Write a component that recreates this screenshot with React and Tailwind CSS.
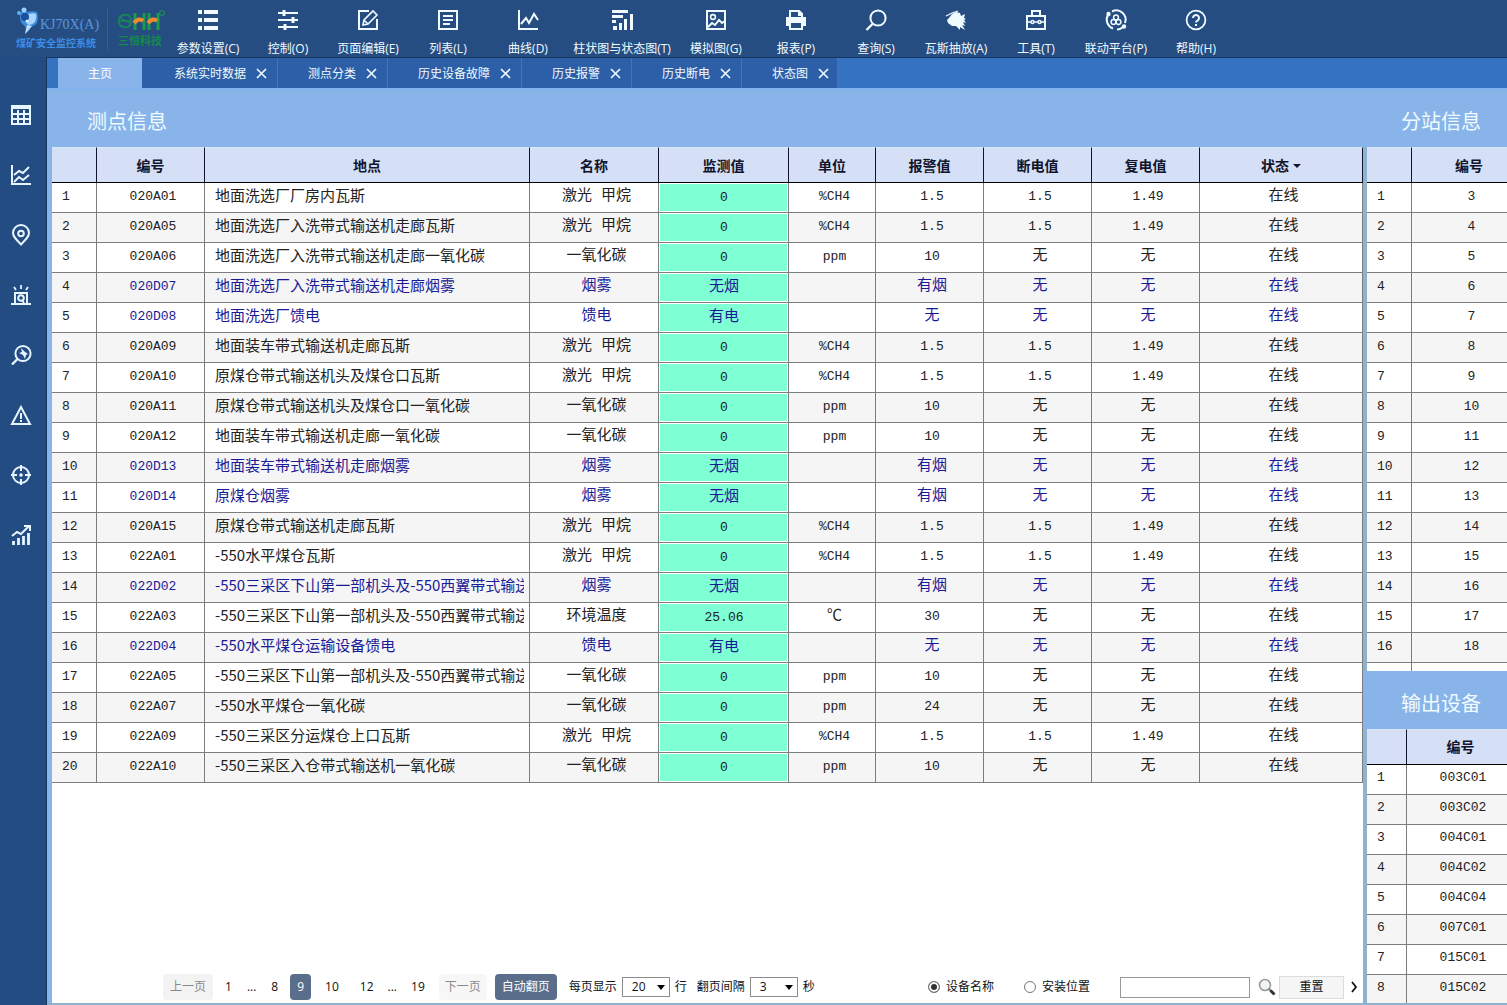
import React, { useState } from 'react';

const menus = [
  { label: '参数设置(C)', icon: 'params' },
  { label: '控制(O)', icon: 'control' },
  { label: '页面编辑(E)', icon: 'edit' },
  { label: '列表(L)', icon: 'list' },
  { label: '曲线(D)', icon: 'curve' },
  { label: '柱状图与状态图(T)', icon: 'bars', wide: true },
  { label: '模拟图(G)', icon: 'image' },
  { label: '报表(P)', icon: 'print' },
  { label: '查询(S)', icon: 'search' },
  { label: '瓦斯抽放(A)', icon: 'gas' },
  { label: '工具(T)', icon: 'tools' },
  { label: '联动平台(P)', icon: 'link' },
  { label: '帮助(H)', icon: 'help' },
];

const tabs = ['系统实时数据', '测点分类', '历史设备故障', '历史报警', '历史断电', '状态图'];

const sideItems = [
  { label: '实时数据', icon: 'grid' },
  { label: '曲线', icon: 'lines' },
  { label: '位置', icon: 'pin' },
  { label: '报警', icon: 'alarm' },
  { label: '断电查询', icon: 'powerSearch' },
  { label: '故障', icon: 'warning' },
  { label: '定位', icon: 'target' },
  { label: '统计', icon: 'growth' },
];

const GAS = ['激光 甲烷', '0', '%CH4', '1.5', '1.5', '1.49'];
const CO = ['一氧化碳', '0', 'ppm', '10', '无', '无'];
const SMOKE = ['烟雾', '无烟', '', '有烟', '无', '无'];
const FEED = ['馈电', '有电', '', '无', '无', '无'];

const points = [
  ['020A01', '地面洗选厂厂房内瓦斯', ...GAS],
  ['020A05', '地面洗选厂入洗带式输送机走廊瓦斯', ...GAS],
  ['020A06', '地面洗选厂入洗带式输送机走廊一氧化碳', ...CO],
  ['020D07', '地面洗选厂入洗带式输送机走廊烟雾', ...SMOKE],
  ['020D08', '地面洗选厂馈电', ...FEED],
  ['020A09', '地面装车带式输送机走廊瓦斯', ...GAS],
  ['020A10', '原煤仓带式输送机头及煤仓口瓦斯', ...GAS],
  ['020A11', '原煤仓带式输送机头及煤仓口一氧化碳', ...CO],
  ['020A12', '地面装车带式输送机走廊一氧化碳', ...CO],
  ['020D13', '地面装车带式输送机走廊烟雾', ...SMOKE],
  ['020D14', '原煤仓烟雾', ...SMOKE],
  ['020A15', '原煤仓带式输送机走廊瓦斯', ...GAS],
  ['022A01', '-550水平煤仓瓦斯', ...GAS],
  ['022D02', '-550三采区下山第一部机头及-550西翼带式输送', ...SMOKE],
  ['022A03', '-550三采区下山第一部机头及-550西翼带式输送', '环境温度', '25.06', '℃', '30', '无', '无'],
  ['022D04', '-550水平煤仓运输设备馈电', ...FEED],
  ['022A05', '-550三采区下山第一部机头及-550西翼带式输送', ...CO],
  ['022A07', '-550水平煤仓一氧化碳', '一氧化碳', '0', 'ppm', '24', '无', '无'],
  ['022A09', '-550三采区分运煤仓上口瓦斯', ...GAS],
  ['022A10', '-550三采区入仓带式输送机一氧化碳', ...CO],
];

const stations = Array.from({ length: 17 }, (_, i) => String(i + 3));
const outputs = ['003C01', '003C02', '004C01', '004C02', '004C04', '007C01', '015C01', '015C02'];

const icons = {
  params: (
    <g fill="currentColor" stroke="none">
      <path d="M0 0h4v4H0zM0 8h4v4H0zM0 16h4v4H0zM6 0h14v4H6zM6 8h14v4H6zM6 16h14v4H6z" />
    </g>
  ),
  control: (
    <>
      <path d="M0 3h20M0 10h20M0 17h20" />
      <path d="M6 0v6M15 7v6M7 14v6" strokeWidth="3" />
    </>
  ),
  edit: (
    <>
      <path d="M11 1H1v18h18V9" />
      <path d="M5 15l1-5 9-9 4 4-9 9zM6 10l4 4" strokeWidth="1.6" />
    </>
  ),
  list: <path d="M1 1h18v18H1zM5 6h10M5 10h10M5 14h7" />,
  curve: <path d="M1 0v19h19M3 14l5-6 3 5 5-9 4 6" />,
  bars: (
    <g fill="currentColor" stroke="none">
      <path d="M0 0h16v3H0zM0 5h11v3H0zM0 10h4v3H0zM1 16h4v4H1zM7 13h3v7H7zM12 9h3v11h-3zM18 4h3v16h-3z" />
    </g>
  ),
  image: (
    <>
      <path d="M1 1h18v18H1z" />
      <circle cx="7" cy="7" r="2.4" strokeWidth="1.6" />
      <path d="M2 17l4-4 3 2 4-5 3 3 3-2" />
    </>
  ),
  print: (
    <>
      <path d="M4 7V1h9l3 3v3" />
      <path d="M0 7h20v9h-3v-4H3v4H0z" fill="currentColor" stroke="none" />
      <path d="M4 12h12v7H4z" />
      <path d="M12 1h2l3 3v2h-5z" fill="currentColor" stroke="none" />
    </>
  ),
  search: (
    <>
      <circle cx="12" cy="8" r="7.6" strokeWidth="2" />
      <path d="M6.500 14L0.500 20" strokeWidth="2.4" />
    </>
  ),
  gas: (
    <>
      <path
        fill="currentColor"
        stroke="none"
        d="M3 8l3-4 4-2 4 1 1 3 4-2-1 4 2 1-2 1 2 3-3-1 2 4-3-1 3 5-5-3v3l-4-4-4 0-4-3-1-3z"
      />
      <path d="M0 6l6-3 6-2" strokeWidth="1.200" />
    </>
  ),
  tools: (
    <>
      <path d="M1 6h18v13H1zM6 6V1h8v5" />
      <path d="M2 12h3M8 12h4M15 12h3" strokeWidth="1.400" />
      <circle cx="6.500" cy="12" r="1.500" strokeWidth="1.400" />
      <circle cx="13.500" cy="12" r="1.500" strokeWidth="1.400" />
    </>
  ),
  link: (
    <>
      <path d="M7 18.500A9.300 9.300 0 0 1 2 5M6 1.500A9.300 9.300 0 0 1 19 13M17 17a9 9 0 0 1-6 2.500" />
      <circle cx="2.500" cy="4" r="2.200" fill="currentColor" stroke="none" />
      <circle cx="18" cy="16.500" r="2.200" fill="currentColor" stroke="none" />
      <circle cx="10" cy="7.500" r="2.400" strokeWidth="1.500" />
      <circle cx="7.500" cy="12" r="2.400" strokeWidth="1.500" />
      <circle cx="12.500" cy="12" r="2.400" strokeWidth="1.500" />
    </>
  ),
  help: (
    <>
      <circle cx="10" cy="10" r="9.400" strokeWidth="1.800" />
      <path d="M7 8a3 3 0 1 1 4.500 2.600C10.400 11.200 10 11.600 10 12.500M10 14v2" />
    </>
  ),
  grid: (
    <>
      <path d="M1 2h18v17H1zM1 9h18M1 14h18M7 5v14M13 5v14" />
      <path d="M0 0h20v4H0z" fill="currentColor" stroke="none" />
    </>
  ),
  lines: <path d="M1 0v19h19M3 10l5-4 4 2 6-6M3 17l5-5 4 3 6-5" />,
  pin: (
    <>
      <path d="M10 19.500C5 14.500 2 11.500 2 8a8 8 0 0 1 16 0c0 3.500-3 6.500-8 11.500z" />
      <circle cx="10" cy="8.500" r="2.800" />
    </>
  ),
  alarm: (
    <>
      <path d="M0 19h20M4 19V8h12v11" />
      <circle cx="10" cy="13" r="2.800" />
      <path d="M10 0v4M3 2l2 3M17 2l-2 3M11 15l2 3" strokeWidth="1.800" />
    </>
  ),
  powerSearch: (
    <>
      <circle cx="12" cy="8.500" r="7.600" />
      <path d="M6.500 14L1 19.500" strokeWidth="2.400" />
      <path d="M10 3l1 4-3 1 4 2 2 4 1-4 2-1-3-2z" fill="currentColor" stroke="none" />
    </>
  ),
  warning: (
    <>
      <path d="M10 2l9 17H1z" />
      <path d="M10 8v6M10 15v2" />
    </>
  ),
  target: (
    <>
      <circle cx="10" cy="10" r="8" />
      <path d="M10 0v6M10 14v6M0 10h6M14 10h6" />
      <circle cx="10" cy="10" r="1.800" fill="currentColor" stroke="none" />
    </>
  ),
  growth: (
    <>
      <path d="M1 11l5-4 4 2 8-8M13 1h6v5" />
      <path d="M2.500 20v-4M7.500 20v-7M12.500 20v-9M17.500 20V8" strokeWidth="2.800" />
    </>
  ),
};

function Icon({ name }) {
  return (
    <svg className="h-5 w-5 overflow-visible" viewBox="0 0 20 20" fill="none" stroke="currentColor" strokeWidth="2" aria-hidden="true">
      {icons[name]}
    </svg>
  );
}

function Logo() {
  return (
    <div className="flex w-[168px] shrink-0 items-center pl-4">
      <div className="w-[92px] border-r border-[#3a5c8c]">
        <div className="flex items-end">
          <svg className="h-7 w-6" viewBox="0 0 24 28" aria-hidden="true">
            <path d="M5 5c5 1 10-2 16 0 2 7 1 13-6 15-1 3-3 5-6 7 1-4 1-6 0-8-5-3-6-8-4-14z" fill="#3f8be0" />
            <path d="M12 7c4-1 7-1 8 0 1 6-1 10-7 11-4-1-3-9-1-11z" fill="#a9d4fb" />
            <path d="M11 18l5 1-7 8z" fill="#bfe0ff" />
            <circle cx="9" cy="10" r="4" fill="#1b4f9c" />
            <circle cx="11" cy="14" r="1.500" fill="#d8eeff" />
            <circle cx="3" cy="6" r="2" fill="#5fb0f5" />
            <circle cx="8" cy="3" r="2.500" fill="#9ad0ff" />
          </svg>
          <span className="font-['Liberation_Serif',serif] text-sm leading-5 text-[#5c95d8]">KJ70X(A)</span>
        </div>
        <div className="text-[10px] font-bold leading-4 whitespace-nowrap text-[#3d8ee6]">煤矿安全监控系统</div>
      </div>
      <div className="pl-[10px]">
        <svg className="h-6 w-12" viewBox="0 0 48 24" fill="none" aria-hidden="true">
          <circle cx="7" cy="12" r="6.500" stroke="#17875a" strokeWidth="1.500" />
          <path d="M12 7C9 4 2 6 3 9s9 2 9 6-7 4-10 1M1 12h12" stroke="#17875a" strokeWidth="1.500" />
          <path d="M17 4v17M26 4v17M31 4v17M40 4v17" stroke="#1c9a4c" strokeWidth="3" />
          <path d="M16 14q5-6 9-2M30 14q5-6 9-2" stroke="#f08a2c" strokeWidth="4" />
          <circle cx="44" cy="4" r="2.500" stroke="#1c9a4c" />
        </svg>
        <div className="text-[11px] font-bold leading-4 text-[#128a4c]">三恒科技</div>
      </div>
    </div>
  );
}

const isLatin = (text) => /^[\x20-\x7e]*$/.test(text);

function Cell({ children, className = 'pl-[5px] pb-[2px] text-center' }) {
  return (
    <td
      className={`h-[30px] border-r border-b border-[#7d7d7d] whitespace-nowrap ${
        isLatin(children) ? 'text-[13px]' : 'text-[15px]'
      } ${className}`}
    >
      {children}
    </td>
  );
}

function IndexCell({ children }) {
  return <Cell className="pb-[2px] pl-[10px] text-left text-[#222]">{children}</Cell>;
}

function Th({ children }) {
  return (
    <th className="h-9 border-t border-r border-b border-t-[#d8e6fa] border-r-[#10142c] border-b-black bg-[#d5dff5] pt-px text-sm font-bold">
      {children}
    </th>
  );
}

const tableFont = "font-['Liberation_Mono','Noto_Sans_CJK_SC',monospace]";
const uiFont = "font-['Open_Sans','Noto_Sans_CJK_SC',sans-serif]";

function PointTable() {
  return (
    <table className={`w-full table-fixed border-separate border-spacing-0 text-[#222] ${tableFont}`}>
      <colgroup>
        <col className="w-[45px]" />
        <col className="w-[108px]" />
        <col />
        <col className="w-[129px]" />
        <col className="w-[130px]" />
        <col className="w-[87px]" />
        <col className="w-[108px]" />
        <col className="w-[108px]" />
        <col className="w-[108px]" />
        <col className="w-[163px]" />
      </colgroup>
      <thead className={`text-[#10142c] ${uiFont}`}>
        <tr>
          <Th />
          <Th>编号</Th>
          <Th>地点</Th>
          <Th>名称</Th>
          <Th>监测值</Th>
          <Th>单位</Th>
          <Th>报警值</Th>
          <Th>断电值</Th>
          <Th>复电值</Th>
          <Th>
            <span className="inline-flex items-center gap-1">
              状态
              <svg className="h-1 w-2" viewBox="0 0 8 4" fill="currentColor" aria-hidden="true">
                <path d="M0 0h8L4 4z" />
              </svg>
            </span>
          </Th>
        </tr>
      </thead>
      <tbody>
        {points.map((row, i) => {
          const [code, place, name, value, unit, alarm, off, on] = row;
          return (
            <tr key={code} className={`even:bg-[#f5f5f5] ${code.includes('D') ? 'text-[#1a1a96]' : ''}`}>
              <IndexCell>{String(i + 1)}</IndexCell>
              <Cell>{code}</Cell>
              <td className="h-[30px] border-r border-b border-[#7d7d7d] pr-[5px] pb-[5px] pl-[10px] font-['Noto_Sans_CJK_SC',sans-serif] text-[15px]">
                <div className="overflow-hidden leading-5 whitespace-nowrap">{place}</div>
              </td>
              <Cell>{name}</Cell>
              <Cell className="bg-[#7fffd4] pt-px pl-px text-center shadow-[inset_0_0_0_1px_white]">{value}</Cell>
              <Cell>{unit}</Cell>
              <Cell>{alarm}</Cell>
              <Cell>{off}</Cell>
              <Cell>{on}</Cell>
              <Cell>在线</Cell>
            </tr>
          );
        })}
      </tbody>
    </table>
  );
}

function CodeTable({ rows, width, firstCol }) {
  return (
    <table className={`table-fixed border-separate border-spacing-0 bg-white text-[#222] ${width} ${tableFont}`}>
      <colgroup>
        <col className={firstCol} />
        <col />
      </colgroup>
      <thead className={`text-[#10142c] ${uiFont}`}>
        <tr>
          <Th />
          <Th>编号</Th>
        </tr>
      </thead>
      <tbody>
        {rows.map((code, i) => (
          <tr key={code} className="even:bg-[#f5f5f5]">
            <IndexCell>{String(i + 1)}</IndexCell>
            <Cell>{code}</Cell>
          </tr>
        ))}
      </tbody>
    </table>
  );
}

function PanelTitle({ children }) {
  return <h2 className="flex h-[58px] shrink-0 items-center pt-2 pl-[35px] text-xl whitespace-nowrap text-[#effbff]">{children}</h2>;
}

function SidePanel({ title, grow, children }) {
  return (
    <section className={`flex min-h-0 flex-col overflow-hidden ${grow}`}>
      <div className="pl-[3px]">
        <PanelTitle>{title}</PanelTitle>
      </div>
      <div className="min-h-0 flex-1 overflow-hidden border-l-4 border-[#8fb3cf]">{children}</div>
    </section>
  );
}

function NumberSelect({ id, value, onChange, options }) {
  return (
    <span className="relative inline-flex">
      <select
        id={id}
        value={value}
        onChange={(e) => onChange(e.target.value)}
        className="h-5 w-12 appearance-none border border-[#8c8c8c] bg-white pl-[9px] text-xs"
      >
        {options.map((o) => (
          <option key={o}>{o}</option>
        ))}
      </select>
      <svg className="pointer-events-none absolute top-2 right-[5px] h-[5px] w-2" viewBox="0 0 8 5" aria-hidden="true">
        <path d="M0 0h8L4 5z" />
      </svg>
    </span>
  );
}

function Radio({ label, name, checked, onChange }) {
  return (
    <label className="flex items-center gap-[6px]">
      <input
        type="radio"
        name={name}
        checked={checked}
        onChange={onChange}
        className="h-3 w-3 appearance-none rounded-full border border-[#777] bg-white checked:bg-[#333] checked:shadow-[inset_0_0_0_2px_white]"
      />
      {label}
    </label>
  );
}

function Pager() {
  const [page, setPage] = useState('9');
  const [size, setSize] = useState('20');
  const [delay, setDelay] = useState('3');
  const [field, setField] = useState('name');
  const [keyword, setKeyword] = useState('');

  const pageButton = (n) => (
    <button
      key={n}
      onClick={() => setPage(n)}
      className={`h-[26px] rounded px-[7px] ${page === n ? 'bg-[#5a6d8b] text-white' : ''}`}
    >
      {n}
    </button>
  );

  return (
    <div className="mt-auto flex h-8 items-center justify-between pr-[3px] pl-[111px] text-xs whitespace-nowrap text-[#111]">
      <div className="flex items-center">
        <button className="h-[26px] w-[50px] rounded bg-[#f3f3f3] text-[#8a8a8a]">上一页</button>
        <div className="flex items-center gap-2 px-[5px]">
          {pageButton('1')}
          <span>...</span>
          {pageButton('8')}
        </div>
        {pageButton('9')}
        <div className="flex items-center gap-[7px] px-[7px]">
          {pageButton('10')}
          {pageButton('12')}
          <span>...</span>
          {pageButton('19')}
        </div>
        <button className="h-[26px] w-12 rounded bg-[#f7f7f7] text-[#8a8a8a]">下一页</button>
        <button className="ml-2 h-[26px] w-[62px] rounded bg-[#5a6d8b] text-white">自动翻页</button>
        <div className="flex items-center gap-[5px] pl-3">
          <label htmlFor="page-size">每页显示</label>
          <NumberSelect id="page-size" value={size} onChange={setSize} options={['10', '20', '50']} />
          <span>行</span>
          <label htmlFor="page-delay" className="pl-[5px]">翻页间隔</label>
          <NumberSelect id="page-delay" value={delay} onChange={setDelay} options={['3', '5', '10']} />
          <span>秒</span>
        </div>
      </div>
      <div className="flex items-center">
        <Radio label="设备名称" name="field" checked={field === 'name'} onChange={() => setField('name')} />
        <div className="px-[30px]">
          <Radio label="安装位置" name="field" checked={field === 'place'} onChange={() => setField('place')} />
        </div>
        <input
          type="text"
          aria-label="关键字"
          value={keyword}
          onChange={(e) => setKeyword(e.target.value)}
          className="h-[21px] w-[130px] border border-[#999] bg-white px-1"
        />
        <button aria-label="查询" className="pr-[3px] pl-2">
          <svg className="h-[18px] w-[18px]" viewBox="0 0 18 18" fill="none" aria-hidden="true">
            <circle cx="7" cy="7" r="5.500" fill="#eef4f6" stroke="#9a9a9a" strokeWidth="1.600" />
            <path d="M11 11l2 2" stroke="#777" strokeWidth="2" />
            <path d="M12.500 12.500l4 4" stroke="#333" strokeWidth="3" />
          </svg>
        </button>
        <button className="h-[23px] w-[65px] border border-[#dcdcdc] bg-[#f5f5f5]">重置</button>
        <button aria-label="更多" className="pl-1">
          <svg className="h-3 w-3" viewBox="0 0 12 12" fill="none" stroke="#111" strokeWidth="1.800" aria-hidden="true">
            <path d="M4 1l4 5-4 5" />
          </svg>
        </button>
      </div>
    </div>
  );
}

export default function App() {
  return (
    <div className={`flex h-screen flex-col overflow-hidden bg-[#234c82] text-xs ${uiFont}`}>
      <header className="flex h-[57px] shrink-0 bg-[#264d82]">
        <Logo />
        <nav className="flex text-[#effbff]">
          {menus.map((m) => (
            <button
              key={m.label}
              className={`flex flex-col items-center gap-[11px] pt-[10px] leading-4 whitespace-nowrap ${m.wide ? 'w-27' : 'w-20'}`}
            >
              <Icon name={m.icon} />
              {m.label}
            </button>
          ))}
        </nav>
      </header>

      <div className="flex min-h-0 flex-1">
        {/* Sidebar */}
        <nav className="flex w-[46px] shrink-0 flex-col pt-7 pr-1 text-[#e6f5ff]">
          {sideItems.map((s) => (
            <button key={s.icon} aria-label={s.label} className="flex h-15 items-center justify-center">
              <Icon name={s.icon} />
            </button>
          ))}
        </nav>

        <main className="flex min-w-0 flex-1 flex-col border-t border-l border-[#173561]">
          {/* Tabs */}
          <div className="flex h-[30px] shrink-0 bg-[#3672c2] pl-[11px] text-[#effbff]">
            <button className="w-[84px] bg-[#88b4e9] pt-px text-white">主页</button>
            {tabs.map((t) => (
              <div
                key={t}
                className="flex items-center gap-[10px] border-r border-[#3f75bd] bg-[#2c5fa8] pt-px pr-[10px] pl-[30px] whitespace-nowrap first-of-type:pl-8 last-of-type:pr-2"
              >
                <button>{t}</button>
                <button aria-label={`关闭${t}`}>
                  <svg className="h-[11px] w-[11px]" viewBox="0 0 11 11" stroke="currentColor" strokeWidth="1.600" aria-hidden="true">
                    <path d="M1 1l9 9M10 1l-9 9" />
                  </svg>
                </button>
              </div>
            ))}
          </div>

          <div className="flex min-h-0 flex-1 border-t border-b-2 border-t-[#7fb2f3] border-b-[#8fb3cf] bg-[#88b4e9] pl-[5px]">
            <section className="flex min-w-0 flex-1 flex-col">
              <PanelTitle>测点信息</PanelTitle>
              <div className="flex min-h-0 flex-1 flex-col bg-white">
                <PointTable />
                <Pager />
              </div>
            </section>

            <aside className="flex w-36 shrink-0 flex-col">
              <SidePanel title="分站信息" grow="flex-[7]">
                <CodeTable rows={stations} width="w-40" firstCol="w-[45px]" />
              </SidePanel>
              <SidePanel title="输出设备" grow="flex-[4]">
                <CodeTable rows={outputs} width="w-[148px]" firstCol="w-10" />
              </SidePanel>
            </aside>
          </div>
        </main>
      </div>
    </div>
  );
}
